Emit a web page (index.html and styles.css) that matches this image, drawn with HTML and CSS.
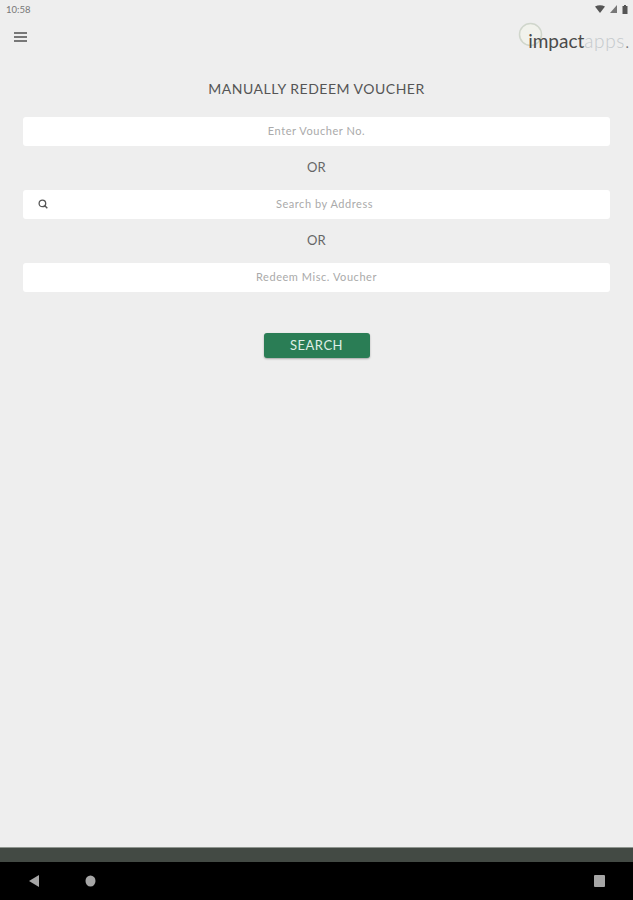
FILE: index.html
```html
<!DOCTYPE html>
<html lang="en">
<head>
    <meta charset="UTF-8">
    <meta name="viewport" content="width=device-width, initial-scale=1.0">
    <title>Manually Redeem Voucher</title>
    <link rel="stylesheet" href="styles.css">
</head>
<body>
    <div class="status-bar">
        <span class="clock">10:58</span>
        <div class="status-icons">
            <svg width="10" height="8" viewBox="0 0 10 8"><path d="M0 1.5Q5-1 10 1.5L5 8Z" fill="#555"/></svg>
            <svg width="7" height="8" viewBox="0 0 7 8"><path d="M7 0V8H0Z" fill="#777"/></svg>
            <svg width="6" height="9" viewBox="0 0 6 9"><path d="M2 0H4V1H5.5V9H.5V1H2Z" fill="#555"/></svg>
        </div>
    </div>

    <header class="toolbar">
        <button class="menu-btn" type="button" aria-label="Menu">
            <span></span><span></span><span></span>
        </button>
        <div class="logo">
            <svg class="logo-ring" width="25" height="25" viewBox="0 0 25 25">
                <circle cx="12.5" cy="12.5" r="11" fill="#f1f2ec" stroke="#d0d6cc" stroke-width="1.5"/>
            </svg>
            <span class="logo-text"><b>impact</b>apps<i>.</i></span>
        </div>
    </header>

    <main class="content">
        <h1>MANUALLY REDEEM VOUCHER</h1>
        <div class="field">
            <input type="text" placeholder="Enter Voucher No.">
        </div>
        <p class="or">OR</p>
        <div class="field">
            <svg class="search-icon" width="10" height="10" viewBox="0 0 10 10">
                <circle cx="4.4" cy="4.4" r="3.3" fill="none" stroke="#555" stroke-width="1.3"/>
                <path d="M6.8 6.8L9.3 9.3" stroke="#555" stroke-width="1.4"/>
            </svg>
            <input class="with-icon" type="text" placeholder="Search by Address">
        </div>
        <p class="or">OR</p>
        <div class="field">
            <input type="text" placeholder="Redeem Misc. Voucher">
        </div>
        <button class="search-btn" type="button">SEARCH</button>
    </main>

    <div class="footer-bar"></div>
    <nav class="nav-bar">
        <svg width="12" height="14" viewBox="0 0 12 14"><path d="M11 1V13L1 7Z" fill="#a6a6a6"/></svg>
        <svg class="nav-home" width="11" height="12" viewBox="0 0 11 12"><ellipse cx="5.5" cy="6" rx="5" ry="5.5" fill="#a6a6a6"/></svg>
        <svg class="nav-recent" width="11" height="12" viewBox="0 0 11 12"><rect x="0" y="0" width="11" height="12" rx="1" fill="#a6a6a6"/></svg>
    </nav>
</body>
</html>
```

FILE: styles.css
```css
/* General Styles */
body {
    font-family: 'Lato', 'Liberation Sans', sans-serif;
    background: #eeeeee;
    color: #555;
    margin: 0;
    height: 900px;
    display: flex;
    flex-direction: column;
    overflow: hidden;
}

/* Status Bar */
.status-bar {
    height: 18px;
    padding: 0 5px 0 6px;
    display: flex;
    justify-content: space-between;
    align-items: center;
}

.clock {
    font-size: 9.5px;
    color: #777;
}

.status-icons {
    display: flex;
    align-items: center;
    gap: 5px;
}

/* Toolbar */
.toolbar {
    height: 38px;
    padding: 0 3px 0 14px;
    display: flex;
    justify-content: space-between;
    align-items: center;
}

.menu-btn {
    width: 13px;
    padding: 0;
    border: none;
    background: none;
    display: flex;
    flex-direction: column;
    gap: 2px;
}

.menu-btn span {
    height: 2px;
    background: #777;
}

.logo {
    position: relative;
    width: 112px;
    height: 30px;
    display: flex;
    justify-content: flex-end;
    align-items: flex-end;
}

.logo-ring {
    position: absolute;
    left: 0;
    top: 0;
}

.logo-text {
    position: relative;
    font-size: 19px;
    line-height: 22px;
    font-weight: 300;
    letter-spacing: 0.6px;
    color: #c4c9cc;
}

.logo-text b {
    font-weight: 400;
    letter-spacing: 0;
    color: #4a4a4a;
}

.logo-text i {
    font-style: normal;
    color: #777;
}

/* Form */
.content {
    flex: 1;
    padding: 0 23px;
    display: flex;
    flex-direction: column;
    align-items: center;
}

h1 {
    margin: 24px 0 20px;
    font-size: 14px;
    line-height: 17px;
    font-weight: 400;
    letter-spacing: 0.5px;
    color: #555;
}

.field {
    position: relative;
    width: 100%;
    height: 29px;
}

.field input {
    display: block;
    width: 100%;
    height: 100%;
    box-sizing: border-box;
    border: none;
    border-radius: 3px;
    background: #fff;
    padding: 0 0 2px;
    text-align: center;
    font-family: inherit;
    font-size: 11px;
    letter-spacing: 0.55px;
}

.field input::placeholder {
    color: #aaa;
}

.field input.with-icon {
    padding-left: 16px;
}

.search-icon {
    position: absolute;
    left: 15px;
    top: 9px;
}

.or {
    margin: 0;
    height: 44px;
    line-height: 42px;
    font-size: 13px;
    letter-spacing: 0.2px;
    color: #666;
}

.search-btn {
    margin-top: 41px;
    width: 106px;
    height: 25px;
    padding: 0 0 2px;
    border: none;
    border-radius: 3px;
    background: #2a7d55;
    box-shadow: 0 1px 2px rgba(0, 0, 0, 0.3);
    color: #dfeee6;
    font-family: inherit;
    font-size: 13px;
    letter-spacing: 0.5px;
}

/* Bottom Bars */
.footer-bar {
    height: 15px;
    background: #434a44;
    border-top: 1px solid #8f958f;
    box-sizing: border-box;
}

.nav-bar {
    height: 38px;
    background: #000;
    padding: 0 28px;
    display: flex;
    align-items: center;
}

.nav-home {
    margin-left: 45px;
}

.nav-recent {
    margin-left: auto;
}
```
